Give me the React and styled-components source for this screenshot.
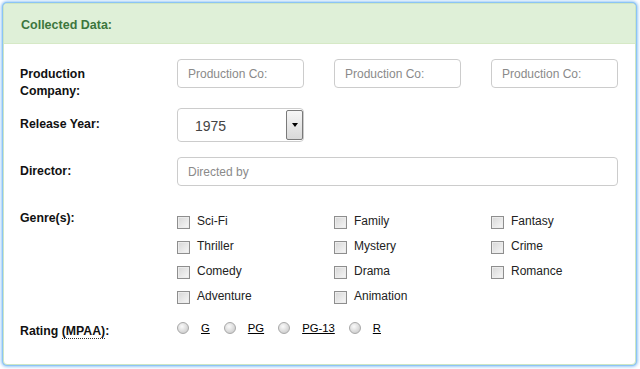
import React from 'react'
import styled, { createGlobalStyle } from 'styled-components'

const genres = [
  'Sci-Fi', 'Family', 'Fantasy',
  'Thriller', 'Mystery', 'Crime',
  'Comedy', 'Drama', 'Romance',
  'Adventure', 'Animation',
]

const ratings = ['G', 'PG', 'PG-13', 'R']

const App = () => (
  <>
    <GlobalStyle />
    <Panel>
      <PanelHeader>Collected Data:</PanelHeader>
      <PanelBody>
        <Row $gap={20}>
          <Label $top={7} $narrow>Production Company:</Label>
          <TripleInputs>
            <TextInput placeholder="Production Co:" />
            <TextInput placeholder="Production Co:" />
            <TextInput placeholder="Production Co:" />
          </TripleInputs>
        </Row>

        <Row $gap={15}>
          <Label $top={8}>Release Year:</Label>
          <SelectBox>
            <SelectValue>1975</SelectValue>
            <SelectButton>
              <Caret />
            </SelectButton>
          </SelectBox>
        </Row>

        <Row $gap={22}>
          <Label $top={6}>Director:</Label>
          <TextInput placeholder="Directed by" />
        </Row>

        <Row $gap={7}>
          <Label $top={2}>Genre(s):</Label>
          <GenreGrid>
            {genres.map((g) => (
              <CheckItem key={g}>
                <CheckBox />
                {g}
              </CheckItem>
            ))}
          </GenreGrid>
        </Row>

        <Row>
          <Label $top={8}>
            Rating <Abbr title="Motion Picture Association of America">(MPAA)</Abbr>:
          </Label>
          <RadioRow>
            {ratings.map((r) => (
              <RadioItem key={r}>
                <Radio />
                <RadioText>{r}</RadioText>
              </RadioItem>
            ))}
          </RadioRow>
        </Row>
      </PanelBody>
    </Panel>
  </>
)

export default App

// STYLES

const GlobalStyle = createGlobalStyle`
  body {
    margin: 0;
    background: #fff;
    font-family: 'Liberation Sans', Arial, sans-serif;
  }
`

const Panel = styled.div`
  box-sizing: border-box;
  width: 633px;
  margin: 3px 4px 4px 3px;
  border: 1px solid #cfe6c2;
  border-radius: 4px;
  background: #fff;
  box-shadow: 0 0 0 1px #8cc4f5, 0 0 3px 2px rgba(70, 155, 240, 0.55);
  overflow: hidden;
`

const PanelHeader = styled.div`
  box-sizing: border-box;
  height: 40px;
  padding: 3px 17px 0;
  display: flex;
  align-items: center;
  background: #dff0d8;
  border-bottom: 1px solid #d6e9c6;
  color: #3c763d;
  font-size: 12.5px;
  font-weight: 700;
`

const PanelBody = styled.div`
  padding: 15px 17px 24px 16px;
`

const Row = styled.div`
  display: grid;
  grid-template-columns: 157px 1fr;
  align-items: start;
  margin-bottom: ${(p) => p.$gap || 0}px;
`

// the two-line label spills into the gap below, as in the form
const Label = styled.div`
  padding-top: ${(p) => p.$top}px;
  max-width: ${(p) => (p.$narrow ? '100px' : 'none')};
  margin-bottom: ${(p) => (p.$narrow ? '-12px' : '0')};
  font-size: 12.3px;
  line-height: 17px;
  font-weight: 700;
  color: #111;
`

const Abbr = styled.abbr`
  text-decoration: none;
  border-bottom: 1px dotted #333;
  cursor: help;
`

const TripleInputs = styled.div`
  width: 441px;
  display: grid;
  grid-template-columns: repeat(3, 1fr);
  column-gap: 30px;
`

const TextInput = styled.input`
  box-sizing: border-box;
  width: 100%;
  height: 29px;
  padding: 0 10px;
  border: 1px solid #ccc;
  border-radius: 4px;
  font-family: inherit;
  font-size: 12px;
  color: #555;
  outline: none;

  &::placeholder {
    color: #8a8a8a;
  }
`

const SelectBox = styled.div`
  box-sizing: border-box;
  width: 127px;
  height: 34px;
  display: flex;
  align-items: stretch;
  border: 1px solid #ccc;
  border-radius: 4px;
  padding: 1px 0 1px 17px;
`

const SelectValue = styled.span`
  flex: 1;
  display: flex;
  align-items: center;
  padding-top: 2px;
  font-size: 14px;
  color: #444;
`

const SelectButton = styled.span`
  box-sizing: border-box;
  width: 17px;
  display: flex;
  align-items: center;
  justify-content: center;
  border: 1px solid #7a7a7a;
  border-radius: 2px;
  background: linear-gradient(#f6f6f6, #d9d9d9);
`

const Caret = styled.span`
  width: 0;
  height: 0;
  border-left: 3px solid transparent;
  border-right: 3px solid transparent;
  border-top: 4px solid #000;
`

const GenreGrid = styled.div`
  display: grid;
  grid-template-columns: repeat(3, 157px);
  grid-auto-rows: 25px;
`

const CheckItem = styled.label`
  display: flex;
  align-items: center;
  gap: 7px;
  font-size: 12px;
  color: #222;
`

const CheckBox = styled.span`
  box-sizing: border-box;
  width: 13px;
  height: 13px;
  margin-top: 3px;
  border: 1px solid #8e8e8e;
  background: linear-gradient(135deg, #d6d6d6, #f7f7f7);
  box-shadow: inset 0 0 0 1px #ececec;
  flex-shrink: 0;
`

const RadioRow = styled.div`
  display: flex;
  align-items: center;
  height: 25px;
`

const RadioItem = styled.label`
  display: flex;
  align-items: center;
  gap: 12px;
  margin-right: 14px;
`

const Radio = styled.span`
  box-sizing: border-box;
  width: 12px;
  height: 12px;
  border-radius: 50%;
  border: 1px solid #a8a8a8;
  background: radial-gradient(circle at 40% 35%, #fafafa, #d0d0d0 75%);
`

const RadioText = styled.span`
  font-size: 11.3px;
  color: #000;
  text-decoration: underline;
`
